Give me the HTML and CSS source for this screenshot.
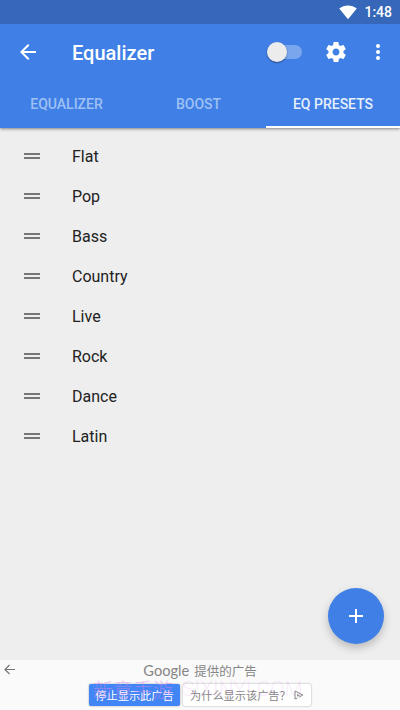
FILE: index.html
```html
<!DOCTYPE html>
<html lang="en">
<head>
<meta charset="utf-8">
<title>Equalizer</title>
<link rel="stylesheet" href="styles.css">
</head>
<body>
<div class="screen">
  <header class="top">
    <div class="status">
      <svg class="wifi" width="18" height="15" viewBox="0 0 18 15"><path d="M0.2 3.4C5.3-.6 12.700-.6 17.800 3.400L9 14.200z" fill="#fff"/></svg>
      <span class="clock">1:48</span>
    </div>
    <div class="toolbar">
      <svg class="back" width="24" height="24" viewBox="0 0 24 24"><path d="M20 11H7.830l5.590-5.590L12 4l-8 8 8 8 1.410-1.410L7.830 13H20z" fill="#fff"/></svg>
      <h1 class="title">Equalizer</h1>
      <div class="switch"><span class="track"></span><span class="knob"></span></div>
      <svg class="gear" width="24" height="24" viewBox="0 0 24 24"><path fill="#fff" d="M19.430 12.980c.04-.32.070-.64.070-.98s-.03-.66-.07-.98l2.110-1.650c.19-.15.240-.42.120-.64l-2-3.460c-.12-.22-.39-.3-.61-.22l-2.490 1c-.52-.4-1.080-.73-1.690-.98l-.38-2.650C14.460 2.180 14.250 2 14 2h-4c-.25 0-.46.180-.49.420l-.38 2.650c-.61.250-1.170.59-1.690.98l-2.490-1c-.23-.09-.49 0-.61.220l-2 3.460c-.13.220-.07.490.120.640l2.110 1.650c-.04.320-.07.650-.07.980s.03.660.070.980l-2.110 1.650c-.19.150-.24.420-.12.640l2 3.460c.12.220.390.300.610.220l2.490-1c.52.400 1.080.730 1.690.980l.38 2.650c.03.240.240.420.490.420h4c.25 0 .46-.18.490-.42l.38-2.650c.61-.25 1.170-.59 1.690-.98l2.490 1c.23.090.490 0 .61-.22l2-3.460c.12-.22.070-.49-.12-.64l-2.110-1.650zM12 15.500c-1.930 0-3.500-1.570-3.500-3.500s1.570-3.500 3.500-3.500 3.500 1.570 3.500 3.500-1.570 3.500-3.500 3.500z"/></svg>
      <svg class="more" width="24" height="24" viewBox="0 0 24 24" fill="#fff"><circle cx="12" cy="6" r="2"/><circle cx="12" cy="12" r="2"/><circle cx="12" cy="18" r="2"/></svg>
    </div>
    <nav class="tabs">
      <span class="tab">EQUALIZER</span>
      <span class="tab middle">BOOST</span>
      <span class="tab active">EQ PRESETS</span>
    </nav>
  </header>
  <main class="content">
    <ul class="presets">
      <li><i class="handle"></i>Flat</li>
      <li><i class="handle"></i>Pop</li>
      <li><i class="handle"></i>Bass</li>
      <li><i class="handle"></i>Country</li>
      <li><i class="handle"></i>Live</li>
      <li><i class="handle"></i>Rock</li>
      <li><i class="handle"></i>Dance</li>
      <li><i class="handle"></i>Latin</li>
    </ul>
    <div class="fab"><svg width="24" height="24" viewBox="0 0 24 24"><path d="M19 13h-6v6h-2v-6H5v-2h6V5h2v6h6z" fill="#fff"/></svg></div>
  </main>
  <footer class="ad">
    <svg class="ad-back" width="12" height="12" viewBox="0 0 12 12" fill="none" stroke="#777" stroke-width="1.200"><path d="M11 5.500H1.500M5.500 1L1 5.500 5.500 10"/></svg>
    <div class="ad-label"><span class="brand">Google</span><span>提供的广告</span></div>
    <div class="ad-actions">
      <span class="btn stop">停止显示此广告</span>
      <span class="btn why"><span class="why-text">为什么显示该广告？</span><svg width="10" height="10" viewBox="0 0 10 10" fill="none" stroke="#858585"><path d="M3.300 8L1 9V1l7.800 4L5 7.200M3.700 3.800v2.400l2-1.200"/></svg></span>
    </div>
    <div class="mark"><span class="mark-name">新意手游</span><span class="mark-site">SIXINYI.COM</span></div>
  </footer>
</div>
</body>
</html>
```
FILE: styles.css
```css
* { box-sizing: border-box; }
body { margin: 0; font-family: Roboto, "Noto Sans CJK SC", sans-serif; }
.screen { width: 400px; height: 710px; display: flex; flex-direction: column; background: #eee; overflow: hidden; }
.top { height: 128px; background: #4080e6; color: #fff; box-shadow: 0 1px 3px rgba(0,0,0,.45); z-index: 1; }
.status { height: 24px; background: #3667b9; display: flex; justify-content: flex-end; align-items: center; padding-right: 8px; gap: 7px; }
.clock { font-size: 14px; font-weight: 500; line-height: 24px; }
.toolbar { height: 56px; display: flex; align-items: center; padding: 0 10px 0 16px; }
.back, .gear, .more { flex: none; }
.title { margin: 2px 0 0 32px; font-size: 20px; font-weight: 500; line-height: 24px; flex: 1; }
.switch { width: 35px; height: 20px; display: grid; align-items: center; }
.track, .knob { grid-area: 1 / 1; }
.track { margin-left: 5px; height: 14px; border-radius: 7px; background: #79a6ed; }
.knob { width: 20px; height: 20px; border-radius: 50%; background: #ececec; box-shadow: 0 1px 2px rgba(0,0,0,.4); }
.gear { margin-left: 22px; }
.more { margin-left: 18px; }
.tabs { height: 48px; display: grid; grid-template-columns: 133px 133px 134px; }
.tab { display: flex; align-items: center; justify-content: center; font-size: 14px; font-weight: 500; color: #9fc0f3; border-bottom: 2px solid transparent; padding-top: 2px; }
.tab.middle { padding-right: 2px; }
.tab.active { color: #e6effc; border-color: #fff; }
.content { flex: 1; display: flex; flex-direction: column; justify-content: space-between; padding: 8px 16px 16px 24px; }
.presets { margin: 0; padding: 0; list-style: none; }
.presets li { height: 40px; display: flex; align-items: center; gap: 32px; font-size: 16px; color: #212121; }
.handle { width: 16px; height: 6px; border: solid #767676; border-width: 2px 0; }
.fab { align-self: flex-end; width: 56px; height: 56px; border-radius: 50%; background: #4080e6; display: flex; align-items: center; justify-content: center; box-shadow: 0 4px 8px rgba(0,0,0,.22); }
.ad { height: 50px; background: #fafafa; position: relative; color: #858585; }
.ad-back { position: absolute; left: 4px; top: 4px; }
.ad-label { height: 20px; display: flex; justify-content: center; align-items: center; gap: 5px; font-size: 12.500px; }
.brand { font-family: Lato, sans-serif; font-size: 14.600px; }
.ad-actions { display: flex; justify-content: center; gap: 3px; padding-top: 4px; }
.btn { height: 22px; display: flex; align-items: center; border-radius: 2px; font-size: 11.200px; box-shadow: 0 0 2px rgba(0,0,0,.4); white-space: nowrap; }
.stop { width: 91px; justify-content: center; background: #4285f4; color: #fff; }
.why { width: 128px; padding-left: 7px; gap: 3px; background: #fff; }
.mark { position: absolute; left: 93px; top: 18px; display: flex; align-items: center; gap: 9px; height: 22px; font-size: 20px; font-weight: 300; white-space: nowrap; color: #d884f0; }
.mark-name { opacity: .5; }
.mark-site { font-size: 21px; opacity: .14; }
```
